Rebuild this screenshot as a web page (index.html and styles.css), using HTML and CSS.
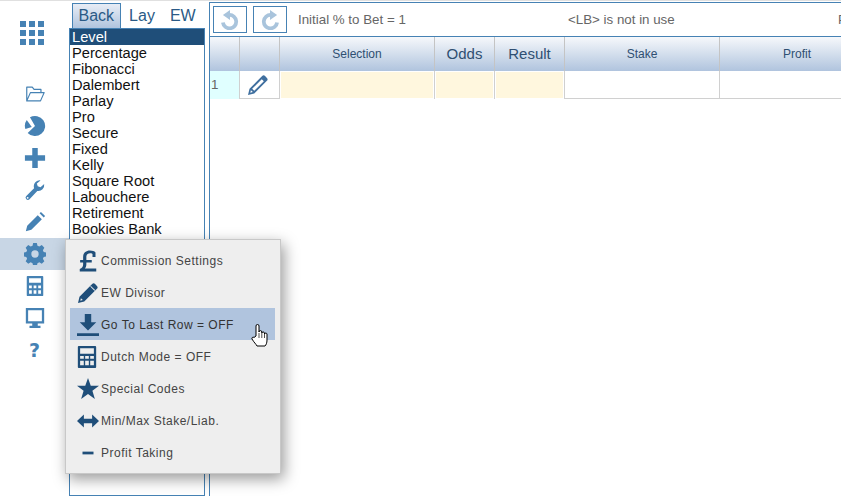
FILE: index.html
```html
<!DOCTYPE html>
<html lang="en">
<head>
    <meta charset="UTF-8">
    <meta name="viewport" content="width=device-width, initial-scale=1.0">
    <title>Staking Plans</title>
    <link rel="stylesheet" href="styles.css">
</head>
<body>
    <div class="app">
        <nav class="sidebar">
            <div class="side-logo">
                <svg class="icon-grid" viewBox="0 0 24 24"><path d="M0 0h6v6H0zM9 0h6v6H9zM18 0h6v6h-6zM0 9h6v6H0zM9 9h6v6H9zM18 9h6v6h-6zM0 18h6v6H0zM9 18h6v6H9zM18 18h6v6h-6z"/></svg>
            </div>
            <div class="side-items">
                <div class="side-item"><svg viewBox="0 0 24 24"><path d="M3 19V4.500h6l2 2.500h7.500v3M3 19.500l4-9h15l-4 9z" fill="none" stroke-width="1.300" stroke="#4682b4" stroke-linejoin="round"/></svg></div>
                <div class="side-item"><svg viewBox="0 0 24 24"><path d="M12 12L6.500 2.500A11 11 0 1 1 4 19.500z"/><path d="M8.500 13L3 5.500A11 11 0 0 0 1.500 15.300z"/></svg></div>
                <div class="side-item"><svg viewBox="0 0 24 24"><path d="M9 1h6v8h8v6h-8v8H9v-8H1V9h8z"/></svg></div>
                <div class="side-item"><svg viewBox="0 0 24 24"><path fill-rule="evenodd" d="M22 5.500l-4 3.500-3-1-1-3 4-3.500a6.500 6.500 0 0 0-7 8.500L2.500 18.500a2.400 2.400 0 0 0 3.500 3.500L14.500 13a6.500 6.500 0 0 0 7.500-7.500zM4 19.500a1 1 0 1 0 1 1 1 1 0 0 0-1-1z"/></svg></div>
                <div class="side-item"><svg viewBox="0 0 24 24"><path d="M2 22l1.500-6L15 4.500l4.500 4.500L8 20.500zM17 2.500l1.500-1.500 4.500 4.500-1.500 1.500z"/></svg></div>
                <div class="side-item is-active"><svg class="icon-gear" viewBox="0 0 24 24"><path fill-rule="evenodd" d="M10 0h4l.7 3 2 .9 2.700-1.600 2.800 2.800-1.600 2.700.9 2 3 .7v4l-3 .7-.9 2 1.600 2.700-2.800 2.800-2.700-1.600-2 .9-.7 3h-4l-.7-3-2-.9-2.700 1.600-2.800-2.800 1.600-2.700-.9-2-3-.7v-4l3-.7.9-2-1.600-2.700 2.800-2.800 2.700 1.600 2-.9zM12 8a4 4 0 1 0 0 8 4 4 0 0 0 0-8z"/></svg></div>
                <div class="side-item"><svg viewBox="0 0 24 24"><path fill-rule="evenodd" d="M4 1h16a1 1 0 0 1 1 1v20a1 1 0 0 1-1 1H4a1 1 0 0 1-1-1V2a1 1 0 0 1 1-1zM5.500 3.500v5h13v-5zM5.500 11.500v3h3v-3zM10.500 11.500v3h3v-3zM15.500 11.500v3h3v-3zM5.500 16.500v4h3v-4zM10.500 16.500v4h3v-4zM15.500 16.500v4h3v-4z"/></svg></div>
                <div class="side-item"><svg viewBox="0 0 24 24"><path fill-rule="evenodd" d="M2 1h20v17h-7v2.500h3V23H6v-2.500h3V18H2zM4.500 3.500v12h15v-12z"/></svg></div>
                <div class="side-item"><span class="help-mark">?</span></div>
            </div>
        </nav>

        <aside class="plans">
            <div class="tabs">
                <span class="tab is-current">Back</span>
                <span class="tab">Lay</span>
                <span class="tab">EW</span>
            </div>
            <ul class="plan-list">
                <li class="is-selected">Level</li>
                <li>Percentage</li>
                <li>Fibonacci</li>
                <li>Dalembert</li>
                <li>Parlay</li>
                <li>Pro</li>
                <li>Secure</li>
                <li>Fixed</li>
                <li>Kelly</li>
                <li>Square Root</li>
                <li>Labouchere</li>
                <li>Retirement</li>
                <li>Bookies Bank</li>
            </ul>
        </aside>

        <main class="sheet">
            <div class="toolbar">
                <button class="tool-btn" type="button"><svg viewBox="0 0 24 24"><path d="M11 6a8 8 0 1 1-7.500 9" fill="none" stroke-width="4.500"/><path d="M12 0v12L3.500 6z" class="arrow-head"/></svg></button>
                <button class="tool-btn is-redo" type="button"><svg viewBox="0 0 24 24"><path d="M11 6a8 8 0 1 1-7.500 9" fill="none" stroke-width="4.500"/><path d="M12 0v12L3.500 6z" class="arrow-head"/></svg></button>
                <span class="tool-text tool-initial">Initial % to Bet = 1</span>
                <span class="tool-text tool-lb">&lt;LB&gt; is not in use</span>
                <span class="tool-text">P</span>
            </div>
            <div class="grid grid-head">
                <div class="cell"></div>
                <div class="cell"></div>
                <div class="cell">Selection</div>
                <div class="cell cell-big">Odds</div>
                <div class="cell cell-big">Result</div>
                <div class="cell">Stake</div>
                <div class="cell">Profit</div>
            </div>
            <div class="grid grid-row">
                <div class="cell cell-num">1</div>
                <div class="cell cell-edit"><svg viewBox="0 0 24 24"><path fill-rule="evenodd" d="M0 24l1.800-7.500L17 1.300a2.500 2.500 0 0 1 3.500 0l2.200 2.200a2.500 2.500 0 0 1 0 3.500L7.500 22.200zM2.800 21.200l3-.7-2.300-2.300zM5 16.500l2.500 2.500L19 7.500 16.500 5z"/><path d="M7 15.500L16.500 6l1.500 1.500L8.500 17z" fill="#fff"/></svg></div>
                <div class="cell cell-input"></div>
                <div class="cell cell-input"></div>
                <div class="cell cell-input"></div>
                <div class="cell"></div>
                <div class="cell"></div>
            </div>
        </main>
    </div>

    <div class="popup-menu">
        <div class="menu-item">
            <span class="menu-icon"><svg class="icon-pound" viewBox="0 0 24 28"><path d="M1 28v-3.500c3-1 4.500-3 4.500-6V16H1.500v-3.500h4V8.500C5.500 3.500 9 0 14.500 0c3.500 0 6 1 7.500 2.500v6h-4V4.500c-1-.5-2-.7-3.200-.7-3 0-5 1.700-5 4.700v4H17V16H9.800v2.500c0 2-.7 4-2 5.500H23v4z"/></svg></span>
            Commission Settings
        </div>
        <div class="menu-item">
            <span class="menu-icon"><svg class="icon-small" viewBox="0 0 24 24"><path fill-rule="evenodd" d="M0 24l1.800-7.500L17 1.300a2.500 2.500 0 0 1 3.500 0l2.200 2.200a2.500 2.500 0 0 1 0 3.500L7.500 22.200zM2.800 21.200l3-.7-2.300-2.300z"/><path d="M15.500 3.500l5 5-.8.8-5-5z" fill="#eee"/></svg></span>
            EW Divisor
        </div>
        <div class="menu-item is-hover">
            <span class="menu-icon"><svg viewBox="0 0 24 24"><path d="M8.500 0h7v9H21l-9 9-9-9h5.500zM0 21h24v3H0z"/></svg></span>
            Go To Last Row = OFF
        </div>
        <div class="menu-item">
            <span class="menu-icon icon-left"><svg viewBox="0 0 24 24"><path fill-rule="evenodd" d="M3 0h18a1 1 0 0 1 1 1v22a1 1 0 0 1-1 1H3a1 1 0 0 1-1-1V1a1 1 0 0 1 1-1zM4.500 2.500v6h15v-6zM4.500 11v3h4v-3zM10 11v3h4v-3zM15.500 11v3h4v-3zM4.500 16v5h4v-5zM10 16v5h4v-5zM15.500 16v5h4v-5z"/></svg></span>
            Dutch Mode = OFF
        </div>
        <div class="menu-item">
            <span class="menu-icon"><svg viewBox="0 0 24 24"><path d="M12 0l3 8.500h9l-7.200 5.500 2.700 9L12 17.500 4.500 23l2.700-9L0 8.500h9z"/></svg></span>
            Special Codes
        </div>
        <div class="menu-item">
            <span class="menu-icon"><svg viewBox="0 0 24 24"><path d="M0 12l7.500-7v4.500h9V5l7.500 7-7.500 7v-4.500h-9V19z"/></svg></span>
            Min/Max Stake/Liab.
        </div>
        <div class="menu-item">
            <span class="menu-icon"><svg viewBox="0 0 24 24"><path d="M6 10.500h12v3H6z"/></svg></span>
            Profit Taking
        </div>
    </div>

    <svg class="hand-cursor" viewBox="0 0 17 24"><path d="M5 13V3a1.500 1.500 0 0 1 3 0v6a1.400 1.400 0 0 1 2.800 0v1a1.400 1.400 0 0 1 2.700 0v1a1.300 1.300 0 0 1 2.500 0v6c0 3-1 5-2 6H6c-1-2-3-3.500-5-7-.6-1.200 1-2.500 2-1.500z" fill="#fff" stroke="#000" stroke-width="1" stroke-linejoin="round"/><path d="M8 10v5M10.800 10v5M13.500 11v4" stroke="#000" stroke-width=".7" fill="none"/></svg>
</body>
</html>
```

FILE: styles.css
```css
html, body {
    margin: 0;
    height: 100%;
    overflow: hidden;
    background: #fff;
    font-family: "Liberation Sans", Arial, sans-serif;
}
.app {
    display: flex;
    height: 496px;
    box-sizing: border-box;
    border-top: 1px solid #e0e0e0;
}
.sidebar {
    width: 69px;
    flex: none;
}
.sidebar svg {
    fill: #4682b4;
    width: 22px;
    height: 22px;
}
.sidebar .icon-grid {
    width: 24px;
    height: 24px;
}
.side-logo {
    height: 77px;
    padding: 20px 0 0 20px;
    box-sizing: border-box;
}
.side-item {
    height: 32px;
    display: flex;
    align-items: center;
    justify-content: center;
    width: 69px;
}
.side-item.is-active {
    background: #c8d6e5;
}
.help-mark {
    font-family: "DejaVu Sans", sans-serif;
    font-size: 19px;
    font-weight: bold;
    color: #4682b4;
}
.plans {
    width: 136px;
    flex: none;
    margin-right: 4px;
    display: flex;
    flex-direction: column;
}
.tabs {
    display: flex;
    height: 25px;
    margin-top: 2px;
    padding-left: 3px;
}
.tab {
    padding: 0 5.5px;
    font-size: 16px;
    line-height: 23px;
    color: #2a5a86;
    border: 1px solid transparent;
    border-bottom: none;
    margin-right: 2px;
}
.tab.is-current {
    border-color: #4682b4;
    background: linear-gradient(#e8edf5, #b0c4de);
}
.plan-list {
    flex: 1;
    margin: 0;
    padding: 0;
    list-style: none;
    border: 1px solid #4682b4;
    font-size: 14.67px;
    line-height: 16px;
    color: #111;
}
.plan-list li {
    padding-left: 2px;
    height: 16px;
}
.plan-list .is-selected {
    background: #1f4e79;
    color: #fff;
}
.sheet {
    flex: 1;
    min-width: 0;
    border-left: 1px solid #4682b4;
    border-top: 1px solid #4682b4;
    margin-top: 1px;
}
.toolbar {
    height: 34px;
    display: flex;
    align-items: center;
    padding-left: 3px;
    border-bottom: 1px solid #4682b4;
    box-sizing: border-box;
    white-space: nowrap;
    overflow: hidden;
}
.tool-btn {
    width: 34px;
    height: 27px;
    flex: none;
    padding: 0;
    margin-right: 6px;
    background: #fff;
    border: 1px solid #4682b4;
    display: flex;
    align-items: center;
    justify-content: center;
}
.tool-btn svg {
    width: 20px;
    height: 20px;
    stroke: #a9c4dc;
}
.tool-btn .arrow-head {
    fill: #a9c4dc;
    stroke: none;
}
.tool-btn.is-redo svg {
    transform: scaleX(-1);
}
.tool-text {
    font-size: 13.33px;
    color: #666;
    flex: none;
}
.tool-initial {
    margin-left: 5px;
    width: 270px;
}
.tool-lb {
    width: 270px;
}
.grid {
    display: grid;
    grid-template-columns: 30px 40px 155px 60px 70px 155px 155px;
}
.grid-head {
    height: 34px;
    background: linear-gradient(#f6f8fb, #b0c4de);
}
.grid-head .cell {
    display: flex;
    align-items: center;
    justify-content: center;
    padding-bottom: 1px;
    box-sizing: border-box;
    font-size: 12px;
    color: #2f4f72;
    border-right: 1px solid #c4c4c4;
}
.grid-head .cell-big {
    font-size: 15px;
    padding-bottom: 2px;
}
.grid-row {
    height: 28px;
    border-bottom: 1px solid #d0d0d0;
    box-sizing: border-box;
}
.grid-row .cell {
    border-right: 1px solid #d0d0d0;
}
.cell-num {
    background: #e0ffff;
    font-size: 13.33px;
    line-height: 28px;
    color: #666;
    padding-left: 1px;
}
.cell-edit {
    display: flex;
    align-items: center;
    justify-content: center;
    padding-right: 3px;
}
.cell-edit svg {
    width: 20px;
    height: 20px;
    fill: #3f6f9f;
}
.cell-input {
    background: #fff7de;
    box-shadow: inset 0 0 0 1px #fff;
}
.popup-menu {
    position: absolute;
    left: 65px;
    top: 239px;
    width: 216px;
    height: 235px;
    box-sizing: border-box;
    padding: 4px;
    background: #eee;
    border: 1px solid #c8c8c8;
    box-shadow: 3px 5px 14px rgba(0, 0, 0, .4);
    font-size: 12px;
    letter-spacing: .5px;
    color: #444;
}
.menu-item {
    display: flex;
    align-items: center;
    height: 32px;
    width: 205px;
    padding-top: 1px;
    box-sizing: border-box;
}
.menu-item.is-hover {
    background: #b0c4de;
    color: #333;
}
.menu-icon {
    width: 31px;
    padding-left: 5px;
    box-sizing: border-box;
    flex: none;
    display: flex;
    justify-content: center;
}
.menu-icon.icon-left {
    padding-left: 2px;
}
.menu-icon svg {
    width: 22px;
    height: 22px;
    fill: #1f4e79;
}
.menu-icon .icon-small {
    width: 20px;
    height: 20px;
}
.menu-icon .icon-pound {
    width: 18px;
    height: 26px;
}
.hand-cursor {
    position: absolute;
    left: 251px;
    top: 323px;
    width: 17px;
    height: 24px;
}
```
